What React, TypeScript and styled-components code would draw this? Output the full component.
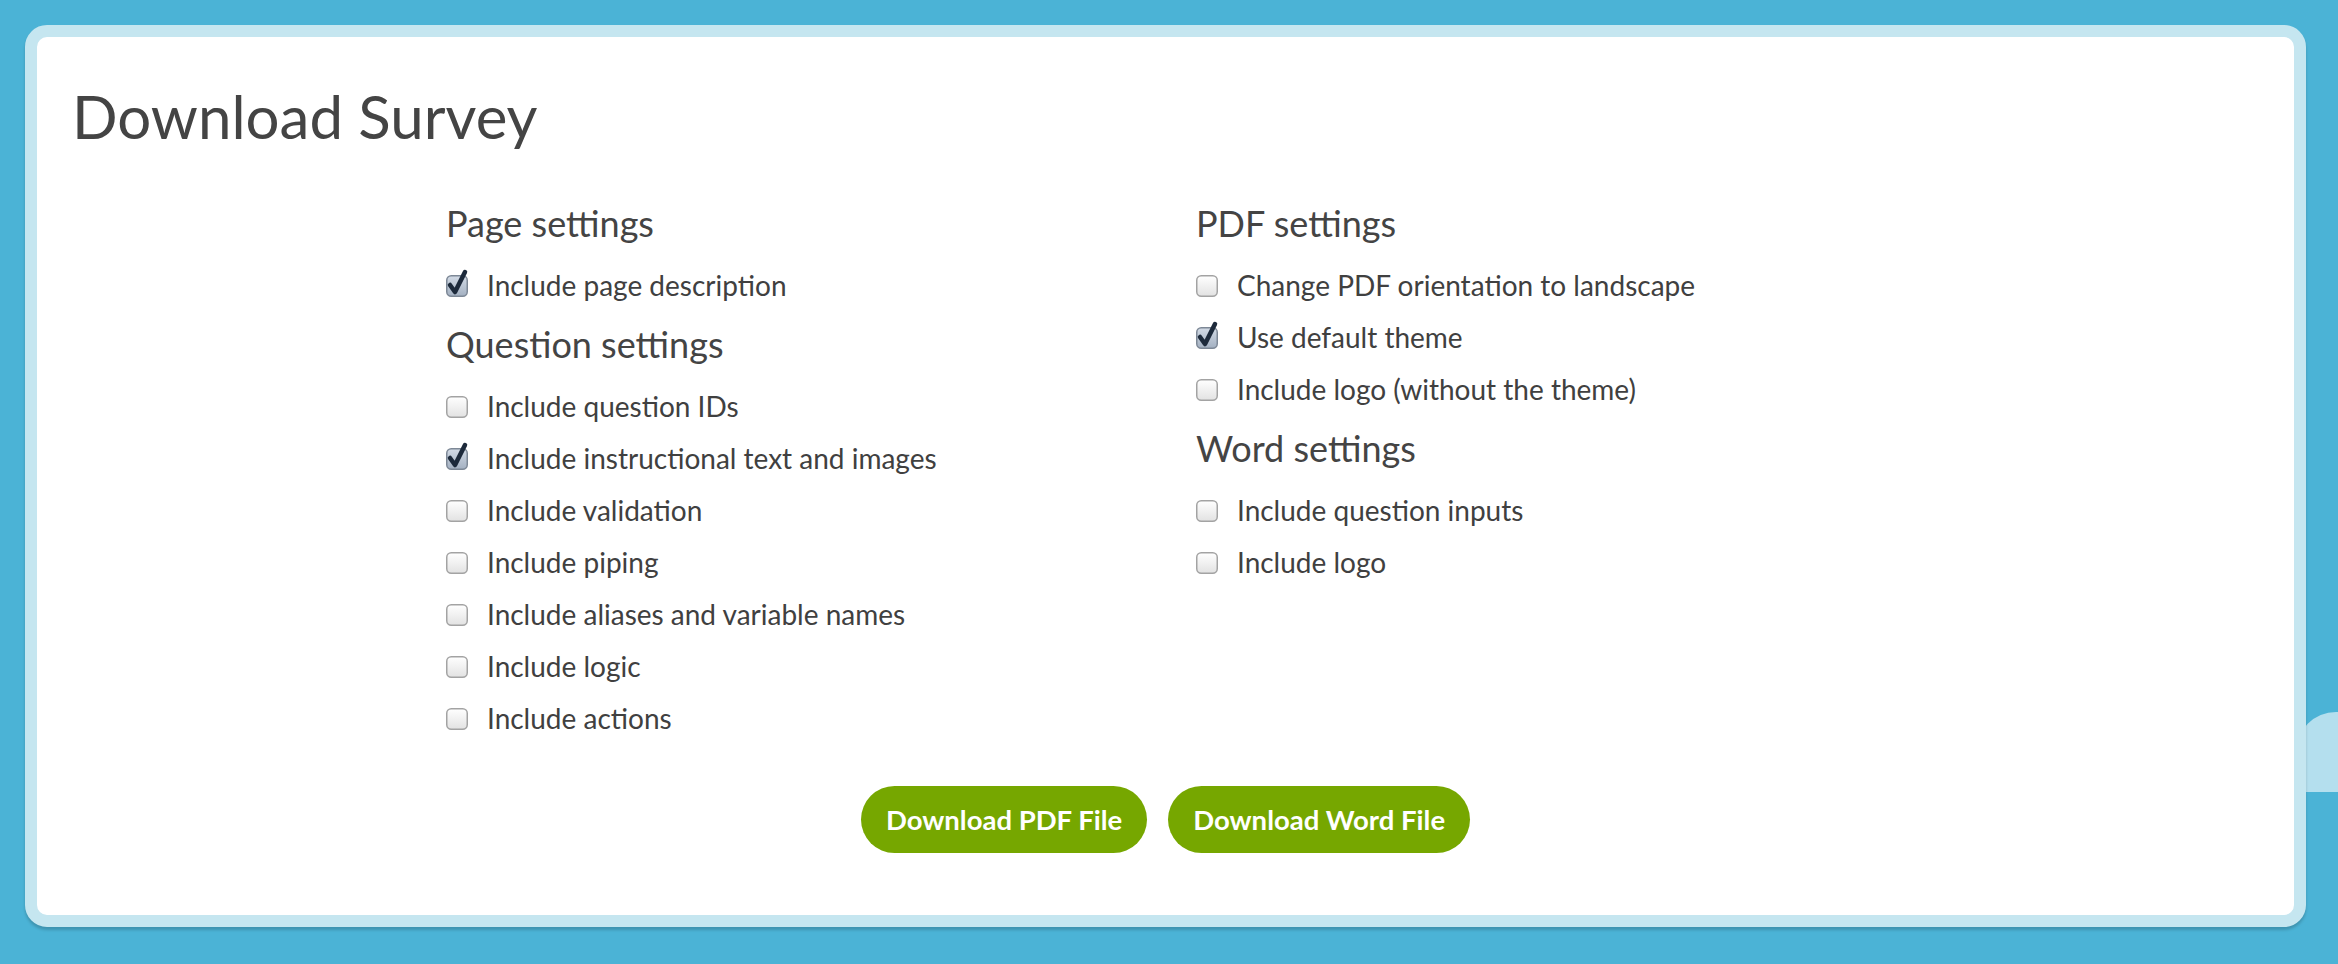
import React from "react";
import styled, { createGlobalStyle } from "styled-components";

const GlobalStyle = createGlobalStyle`
  html, body {
    margin: 0;
    padding: 0;
    background: #4bb3d6;
    font-family: Lato, "Open Sans", sans-serif;
    color: #444;
  }
  #root {
    min-height: 964px;
  }
`;

const Page = styled.div({
  position: "relative",
  minHeight: 964,
  padding: "25px 32px 0 25px",
  boxSizing: "border-box",
  overflow: "hidden",
});

// feedback tab peeking out behind the card
const SideTab = styled.div({
  position: "absolute",
  left: 2296,
  top: 712,
  width: 80,
  height: 80,
  background: "#b4dfee",
  borderRadius: "40px 0 0 0",
});

const Card = styled.div({
  position: "relative",
  border: "12px solid #c5e6f0",
  borderRadius: 22,
  background: "#fff",
  boxShadow: "0 3px 3px rgba(0, 0, 0, .18)",
  minHeight: 902,
  boxSizing: "border-box",
  padding: "43px 0 40px",
});

const Title = styled.h1({
  margin: "0 0 50px 35px",
  fontSize: 60,
  fontWeight: 400,
  lineHeight: 1.2,
  color: "#444",
});

const Columns = styled.div({
  display: "grid",
  gridTemplateColumns: "750px 750px",
  paddingLeft: 409,
});

const Column = styled.div({
  display: "flex",
  flexDirection: "column",
});

const SectionTitle = styled.h3<{ $first?: boolean }>(({ $first }) => ({
  margin: `${$first ? 0 : 12}px 0 14px`,
  fontSize: 36,
  fontWeight: 400,
  lineHeight: 1.2,
  color: "#444",
}));

const Row = styled.label({
  display: "flex",
  alignItems: "center",
  height: 52,
  fontSize: 28,
  lineHeight: "52px",
  color: "#404040",
  gap: 19,
});

const Box = styled.span({
  position: "relative",
  width: 22,
  height: 22,
  flex: "0 0 22px",
  marginTop: 2,
  svg: {
    position: "absolute",
    left: 0,
    top: -6,
    overflow: "visible",
  },
});

const Actions = styled.div({
  display: "flex",
  justifyContent: "center",
  gap: 21,
  marginTop: 42,
});

const Button = styled.button({
  height: 67,
  padding: "0 25px",
  border: "none",
  borderRadius: 34,
  background: "#76a700",
  color: "#fff",
  fontFamily: "Lato, sans-serif",
  fontWeight: 700,
  fontSize: 27.5,
  cursor: "pointer",
});

const CheckBox = ({ checked }: { checked?: boolean }) => (
  <Box>
    <svg width="24" height="28" viewBox="0 -6 24 28">
      <defs>
        <linearGradient id="cbOff" x1="0" y1="0" x2="0" y2="1">
          <stop offset="0" stopColor="#ffffff" />
          <stop offset="1" stopColor="#e2e2e2" />
        </linearGradient>
        <linearGradient id="cbOn" x1="0" y1="0" x2="0" y2="1">
          <stop offset="0" stopColor="#d3dbe6" />
          <stop offset="1" stopColor="#a3b0c1" />
        </linearGradient>
      </defs>
      <rect
        x="0.75"
        y="0.75"
        width="20.5"
        height="20.5"
        rx="4.5"
        fill={checked ? "url(#cbOn)" : "url(#cbOff)"}
        stroke={checked ? "#7d8896" : "#a3a3a3"}
        strokeWidth="1.5"
      />
      {checked && (
        <path
          d="M4 10 L9 17 L19 -3"
          fill="none"
          stroke="#1d2a3b"
          strokeWidth="4.5"
          strokeLinecap="round"
          strokeLinejoin="round"
        />
      )}
    </svg>
  </Box>
);

type Option = { label: string; checked?: boolean };
type Section = { title: string; options: Option[] };

const left: Section[] = [
  { title: "Page settings", options: [{ label: "Include page description", checked: true }] },
  {
    title: "Question settings",
    options: [
      { label: "Include question IDs" },
      { label: "Include instructional text and images", checked: true },
      { label: "Include validation" },
      { label: "Include piping" },
      { label: "Include aliases and variable names" },
      { label: "Include logic" },
      { label: "Include actions" },
    ],
  },
];

const right: Section[] = [
  {
    title: "PDF settings",
    options: [
      { label: "Change PDF orientation to landscape" },
      { label: "Use default theme", checked: true },
      { label: "Include logo (without the theme)" },
    ],
  },
  {
    title: "Word settings",
    options: [{ label: "Include question inputs" }, { label: "Include logo" }],
  },
];

const SettingsColumn = ({ sections }: { sections: Section[] }) => (
  <Column>
    {sections.map((s, i) => (
      <React.Fragment key={s.title}>
        <SectionTitle $first={i === 0}>{s.title}</SectionTitle>
        {s.options.map((o) => (
          <Row key={o.label}>
            <CheckBox checked={o.checked} />
            {o.label}
          </Row>
        ))}
      </React.Fragment>
    ))}
  </Column>
);

export default function App() {
  return (
    <Page>
      <GlobalStyle />
      <SideTab />
      <Card>
        <Title>Download Survey</Title>
        <Columns>
          <SettingsColumn sections={left} />
          <SettingsColumn sections={right} />
        </Columns>
        <Actions>
          <Button>Download PDF File</Button>
          <Button>Download Word File</Button>
        </Actions>
      </Card>
    </Page>
  );
}
